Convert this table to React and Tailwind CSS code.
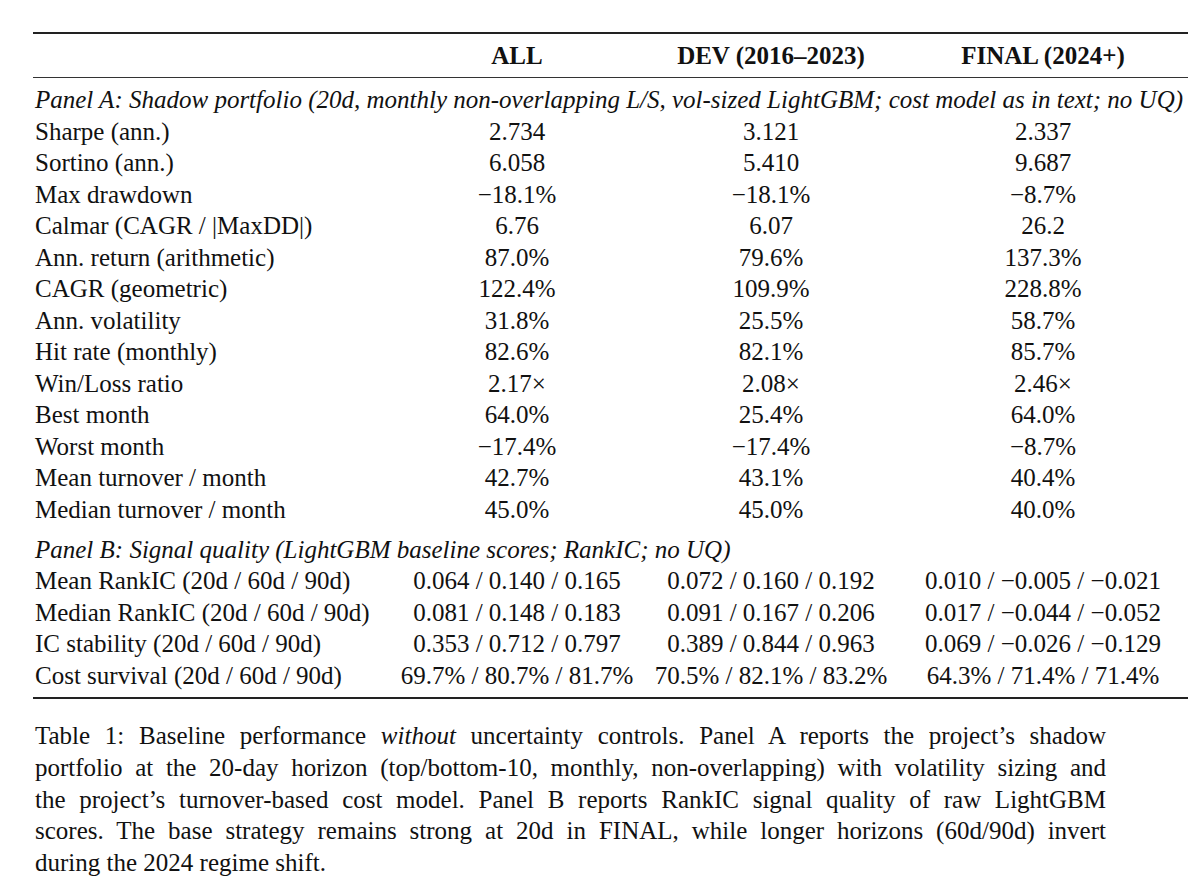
const panelA = [
  ['Sharpe (ann.)', '2.734', '3.121', '2.337'],
  ['Sortino (ann.)', '6.058', '5.410', '9.687'],
  ['Max drawdown', '−18.1%', '−18.1%', '−8.7%'],
  ['Calmar (CAGR / |MaxDD|)', '6.76', '6.07', '26.2'],
  ['Ann. return (arithmetic)', '87.0%', '79.6%', '137.3%'],
  ['CAGR (geometric)', '122.4%', '109.9%', '228.8%'],
  ['Ann. volatility', '31.8%', '25.5%', '58.7%'],
  ['Hit rate (monthly)', '82.6%', '82.1%', '85.7%'],
  ['Win/Loss ratio', '2.17×', '2.08×', '2.46×'],
  ['Best month', '64.0%', '25.4%', '64.0%'],
  ['Worst month', '−17.4%', '−17.4%', '−8.7%'],
  ['Mean turnover / month', '42.7%', '43.1%', '40.4%'],
  ['Median turnover / month', '45.0%', '45.0%', '40.0%'],
];

const panelB = [
  ['Mean RankIC (20d / 60d / 90d)', '0.064 / 0.140 / 0.165', '0.072 / 0.160 / 0.192', '0.010 / −0.005 / −0.021'],
  ['Median RankIC (20d / 60d / 90d)', '0.081 / 0.148 / 0.183', '0.091 / 0.167 / 0.206', '0.017 / −0.044 / −0.052'],
  ['IC stability (20d / 60d / 90d)', '0.353 / 0.712 / 0.797', '0.389 / 0.844 / 0.963', '0.069 / −0.026 / −0.129'],
  ['Cost survival (20d / 60d / 90d)', '69.7% / 80.7% / 81.7%', '70.5% / 82.1% / 83.2%', '64.3% / 71.4% / 71.4%'],
];

const cols = 'grid grid-cols-[357px_254px_254px_290px]';

const Row = ({ cells }) => (
  <div className={`${cols} h-[31.5px] items-center`}>
    <div className="whitespace-nowrap pl-[2px]">{cells[0]}</div>
    <div className="text-center whitespace-nowrap">{cells[1]}</div>
    <div className="text-center whitespace-nowrap">{cells[2]}</div>
    <div className="text-center whitespace-nowrap">{cells[3]}</div>
  </div>
);

const PanelTitle = ({ children }) => (
  <div className="h-[31.5px] flex items-center italic whitespace-nowrap pl-[2px]">{children}</div>
);

export default function App() {
  return (
    <div className="w-[1200px] h-[889px] bg-white text-[#111] font-['Liberation_Serif',serif] text-[25px] leading-[31.5px] overflow-hidden">
      <div className="pl-[33px] pt-[32px] w-[1221px]">
        <div className="w-[1155px]">
          <div className="border-t-2 border-[#222]" />
          <div className={`${cols} h-[43px] items-center font-bold`}>
            <div />
            <div className="text-center">ALL</div>
            <div className="text-center">DEV (2016–2023)</div>
            <div className="text-center">FINAL (2024+)</div>
          </div>
          <div className="border-t border-[#333]" />

          <div className="pt-[6px]">
            <PanelTitle>
              Panel A: Shadow portfolio (20d, monthly non-overlapping L/S, vol-sized LightGBM; cost model as in text; no UQ)
            </PanelTitle>
            {panelA.map((r) => (
              <Row key={r[0]} cells={r} />
            ))}
          </div>

          <div className="pt-[8.5px]">
            <PanelTitle>Panel B: Signal quality (LightGBM baseline scores; RankIC; no UQ)</PanelTitle>
            {panelB.map((r) => (
              <Row key={r[0]} cells={r} />
            ))}
          </div>

          <div className="mt-[6px] border-t-2 border-[#222]" />
        </div>

        <div className="mt-[21px] w-[1073px] pl-[2px] leading-[31.8px]">
          <div className="text-justify [text-align-last:justify]">
            Table 1: Baseline performance <span className="italic">without</span> uncertainty controls. Panel A reports the project’s shadow
          </div>
          <div className="text-justify [text-align-last:justify]">
            portfolio at the 20-day horizon (top/bottom-10, monthly, non-overlapping) with volatility sizing and
          </div>
          <div className="text-justify [text-align-last:justify]">
            the project’s turnover-based cost model. Panel B reports RankIC signal quality of raw LightGBM
          </div>
          <div className="text-justify [text-align-last:justify]">
            scores. The base strategy remains strong at 20d in FINAL, while longer horizons (60d/90d) invert
          </div>
          <div>during the 2024 regime shift.</div>
        </div>
      </div>
    </div>
  );
}
